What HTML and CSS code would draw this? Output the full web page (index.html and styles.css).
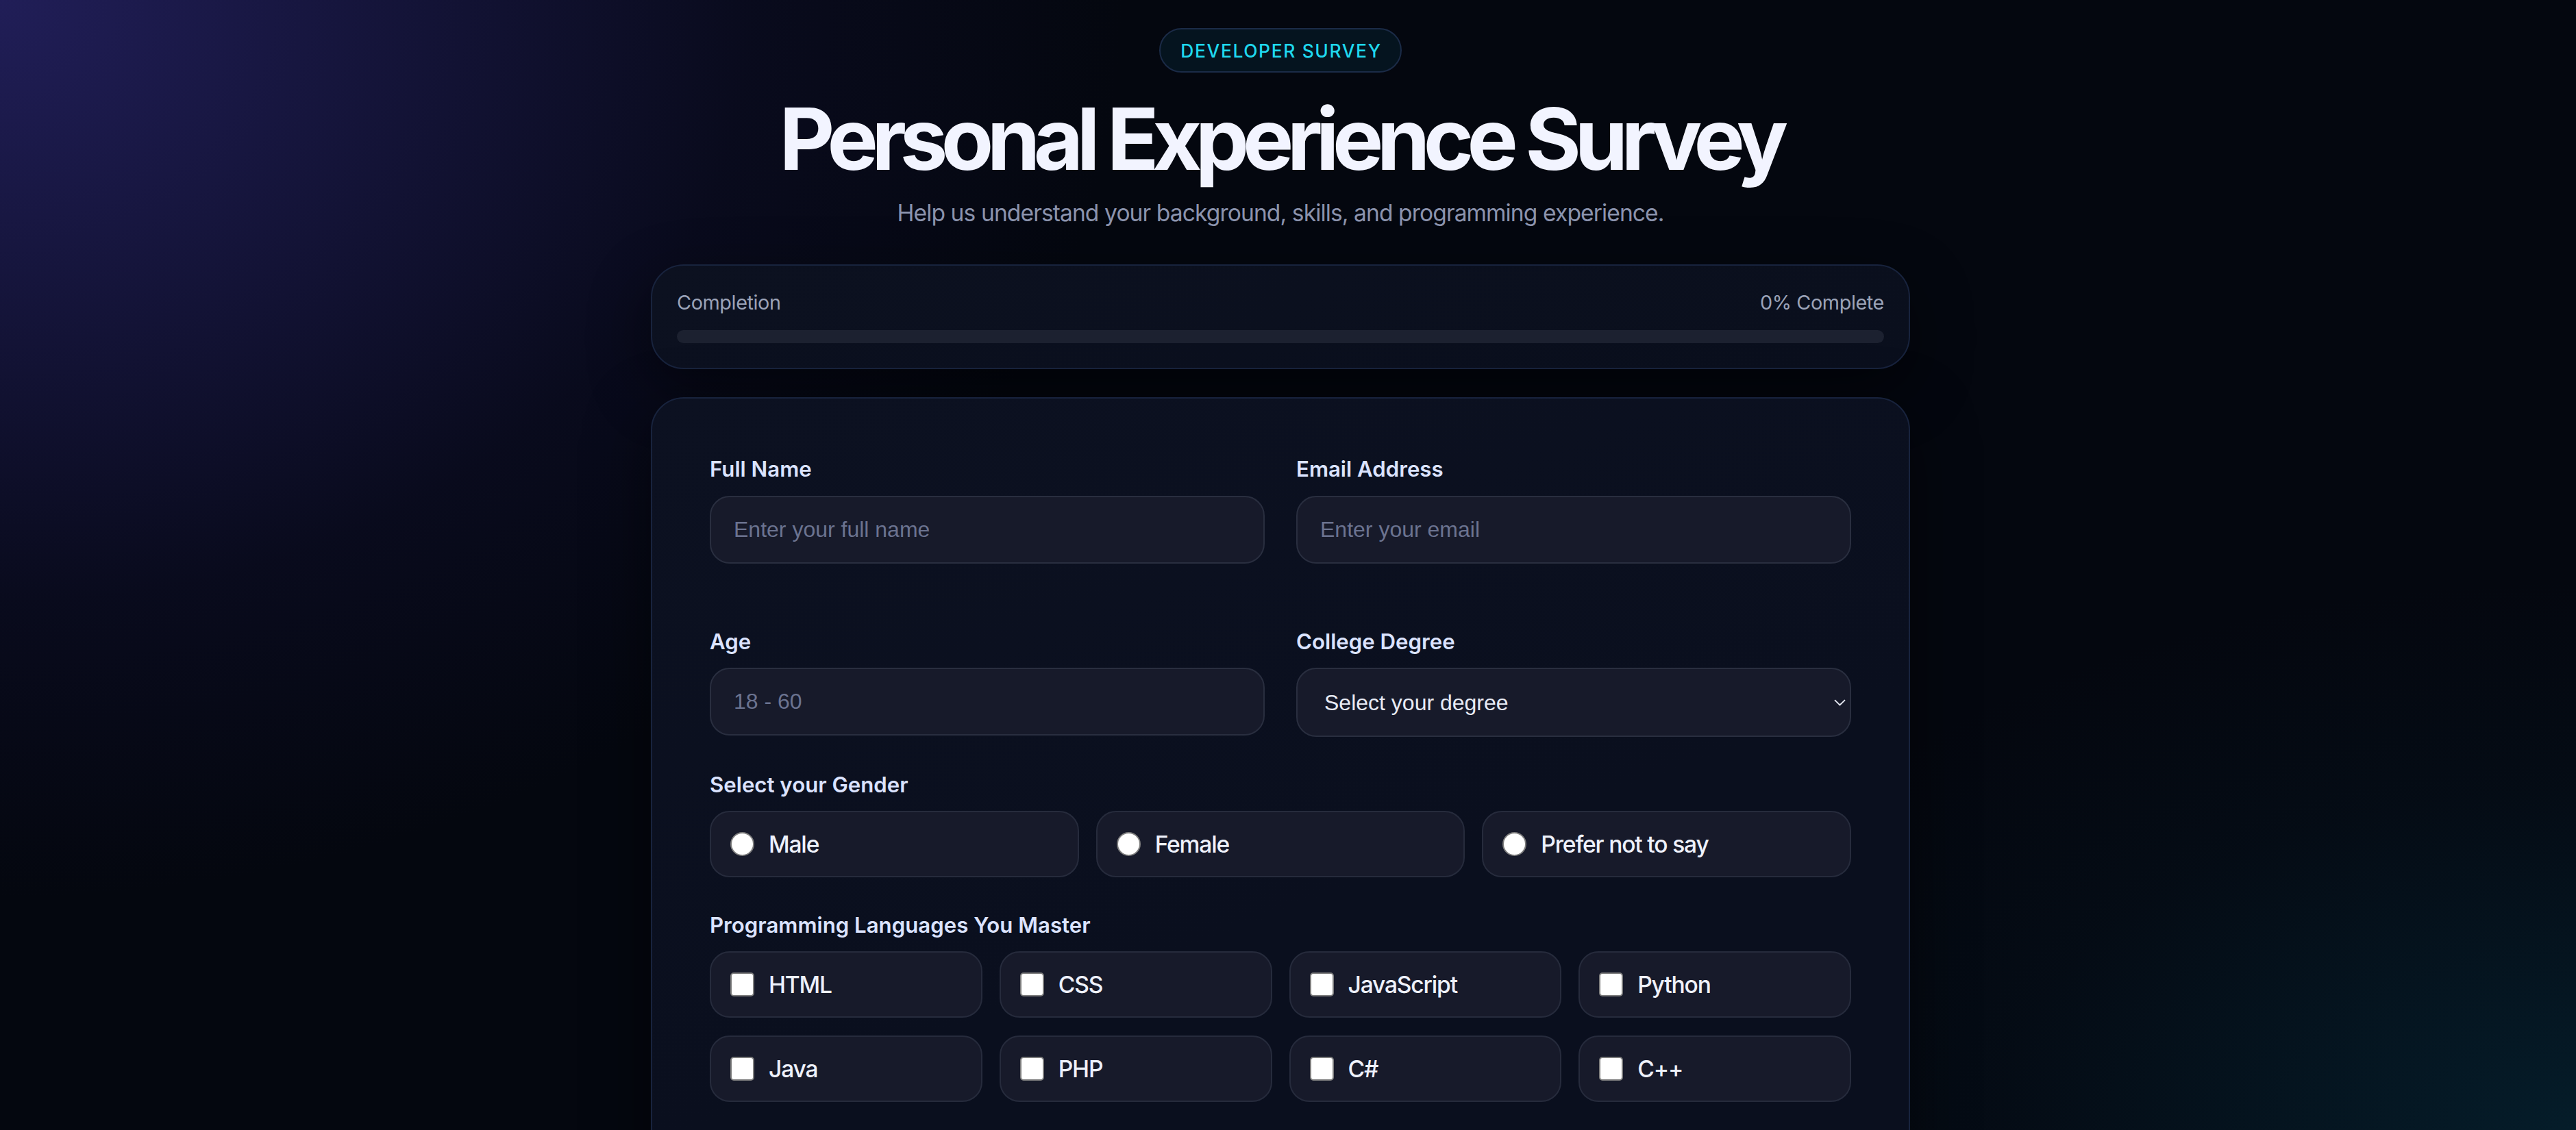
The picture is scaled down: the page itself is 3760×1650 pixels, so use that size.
FILE: index.html
```html
<!DOCTYPE html>
<html lang="en">
<head>
<meta charset="utf-8">
<title>Personal Experience Survey</title>
<link rel="stylesheet" href="styles.css">
</head>
<body>
<main class="page">
  <header class="hero">
    <span class="badge">DEVELOPER SURVEY</span>
    <h1 class="title">Personal Experience Survey</h1>
    <p class="subtitle">Help us understand your background, skills, and programming experience.</p>
  </header>

  <section class="progress-card">
    <div class="progress-head">
      <span>Completion</span>
      <span>0% Complete</span>
    </div>
    <div class="progress-track"><div class="progress-fill" style="width:0%"></div></div>
  </section>

  <form class="form-card">
    <div class="grid-2">
      <div class="field">
        <label class="label" for="name">Full Name</label>
        <input class="input" id="name" type="text" placeholder="Enter your full name">
      </div>
      <div class="field">
        <label class="label" for="email">Email Address</label>
        <input class="input" id="email" type="email" placeholder="Enter your email">
      </div>
    </div>

    <div class="grid-2 row-second">
      <div class="field">
        <label class="label" for="age">Age</label>
        <input class="input" id="age" type="number" placeholder="18 - 60">
      </div>
      <div class="field">
        <label class="label" for="degree">College Degree</label>
        <div class="select-wrap">
          <select class="select" id="degree">
            <option>Select your degree</option>
            <option>Bachelor's</option>
            <option>Master's</option>
            <option>PhD</option>
          </select>
          <svg class="chevron" width="17" height="10" viewBox="0 0 17 10" aria-hidden="true"><path d="M1 1.2 L8.5 8.5 L16 1.2" fill="none" stroke="#e8ebf5" stroke-width="1.8"/></svg>
        </div>
      </div>
    </div>

    <div class="group">
      <div class="label">Select your Gender</div>
      <div class="options cols-3">
        <label class="option"><input class="radio" type="radio" name="gender"><span>Male</span></label>
        <label class="option"><input class="radio" type="radio" name="gender"><span>Female</span></label>
        <label class="option"><input class="radio" type="radio" name="gender"><span>Prefer not to say</span></label>
      </div>
    </div>

    <div class="group">
      <div class="label">Programming Languages You Master</div>
      <div class="options cols-4">
        <label class="option"><input class="check" type="checkbox"><span>HTML</span></label>
        <label class="option"><input class="check" type="checkbox"><span>CSS</span></label>
        <label class="option"><input class="check" type="checkbox"><span>JavaScript</span></label>
        <label class="option"><input class="check" type="checkbox"><span>Python</span></label>
        <label class="option"><input class="check" type="checkbox"><span>Java</span></label>
        <label class="option"><input class="check" type="checkbox"><span>PHP</span></label>
        <label class="option"><input class="check" type="checkbox"><span>C#</span></label>
        <label class="option"><input class="check" type="checkbox"><span>C++</span></label>
      </div>
    </div>
  </form>
</main>
</body>
</html>
```

FILE: styles.css
```css
html, body {
  height: 100%;
}

body {
  margin: 0;
  padding-right: 22px;
  overflow: hidden;
  font-family: Inter, "Noto Sans", sans-serif;
  color: #f2f4ff;
  background:
    radial-gradient(ellipse 2000px 1600px at 0 0, rgba(50, 44, 132, 0.62), rgba(22, 20, 64, 0.28) 55%, rgba(5, 8, 20, 0) 82%),
    radial-gradient(ellipse 1700px 1000px at 100% 100%, rgba(6, 50, 68, 0.5), rgba(6, 30, 44, 0.2) 50%, rgba(5, 8, 20, 0) 80%),
    #04070f;
}

.page {
  width: 1838px;
  margin: 0 auto;
  padding-top: 41px;
}

.hero {
  display: flex;
  flex-direction: column;
  align-items: center;
}

.badge {
  display: inline-block;
  padding: 14.5px 27px 14.5px 29px;
  border: 2px solid #1b2b47;
  border-radius: 999px;
  background: #05141f;
  color: #1fd9ef;
  font-size: 26.4px;
  font-weight: 500;
  letter-spacing: 0.062em;
  line-height: normal;
}

.title {
  margin: 28px 0 0;
  font-size: 124.8px;
  font-weight: 700;
  line-height: 1.1;
  letter-spacing: -0.077em;
  color: #f2f4ff;
}

.subtitle {
  margin: 19px 0 0;
  font-size: 33.6px;
  line-height: normal;
  letter-spacing: -0.9px;
  color: #8b93ad;
}

.progress-card {
  margin-top: 55px;
  padding: 36px;
  border: 2px solid #18233d;
  border-radius: 48px;
  background: linear-gradient(135deg, #0c1120, #0a0f1d);
  box-shadow: 0 30px 90px rgba(0, 0, 0, 0.45);
}

.progress-head {
  display: flex;
  justify-content: space-between;
  font-size: 28.8px;
  line-height: normal;
  letter-spacing: -0.4px;
  color: #9ba3b8;
}

.progress-track {
  margin-top: 23px;
  height: 19px;
  border-radius: 999px;
  background: #1c2130;
  overflow: hidden;
}

.progress-fill {
  height: 100%;
  background: linear-gradient(90deg, #22d3ee, #6366f1);
}

.form-card {
  margin-top: 41px;
  padding: 84px 84px 120px;
  border: 2px solid #18233d;
  border-radius: 48px;
  background: linear-gradient(160deg, #0c1121, #0a0f1e 60%);
  box-shadow: 0 30px 90px rgba(0, 0, 0, 0.5);
}

.grid-2 {
  display: grid;
  grid-template-columns: 1fr 1fr;
  column-gap: 46px;
  align-items: start;
}

.row-second {
  margin-top: 95px;
}

.field {
  display: flex;
  flex-direction: column;
}

.label {
  display: block;
  font-size: 31.2px;
  font-weight: 600;
  line-height: normal;
  color: #dbe3ff;
  margin-bottom: 19.5px;
}

.input {
  box-sizing: border-box;
  width: 100%;
  margin: 0;
  padding: 29px 33px;
  border: 2px solid #292e3f;
  border-radius: 29px;
  background: #171a2a;
  color: #e8ebf5;
  font-family: "Liberation Sans", Arial, sans-serif;
  font-size: 32px;
  line-height: normal;
  outline: none;
  -moz-appearance: textfield;
}

.input::placeholder {
  color: #6b7390;
}

.input::-webkit-outer-spin-button,
.input::-webkit-inner-spin-button {
  -webkit-appearance: none;
  margin: 0;
}

.select-wrap {
  position: relative;
}

.select {
  box-sizing: border-box;
  width: 100%;
  margin: 0;
  padding: 30.5px 40px 30.5px 39px;
  border: 2px solid #292e3f;
  border-radius: 29px;
  background: #171a2a;
  color: #e8ebf5;
  font-family: "Liberation Sans", Arial, sans-serif;
  font-size: 32px;
  line-height: normal;
  appearance: none;
  -webkit-appearance: none;
  outline: none;
}

.chevron {
  position: absolute;
  right: 8px;
  top: 46px;
  pointer-events: none;
}

.group {
  margin-top: 50.5px;
}

.options {
  display: grid;
  gap: 26px 25px;
}

.cols-3 {
  grid-template-columns: repeat(3, 1fr);
}

.cols-4 {
  grid-template-columns: repeat(4, 1fr);
}

.option {
  box-sizing: border-box;
  display: flex;
  align-items: center;
  gap: 21px;
  height: 97px;
  padding: 0 28px;
  border: 2px solid #262b3c;
  border-radius: 29px;
  background: #171a2a;
  font-size: 33.6px;
  font-weight: 500;
  letter-spacing: -0.035em;
  color: #eef1fb;
}

.radio,
.check {
  appearance: none;
  -webkit-appearance: none;
  box-sizing: border-box;
  flex: none;
  width: 35px;
  height: 35px;
  margin: 0;
  background: #ffffff;
  border: 2px solid #7d7d7d;
}

.radio {
  border-radius: 50%;
}

.check {
  border-radius: 5px;
}
```
